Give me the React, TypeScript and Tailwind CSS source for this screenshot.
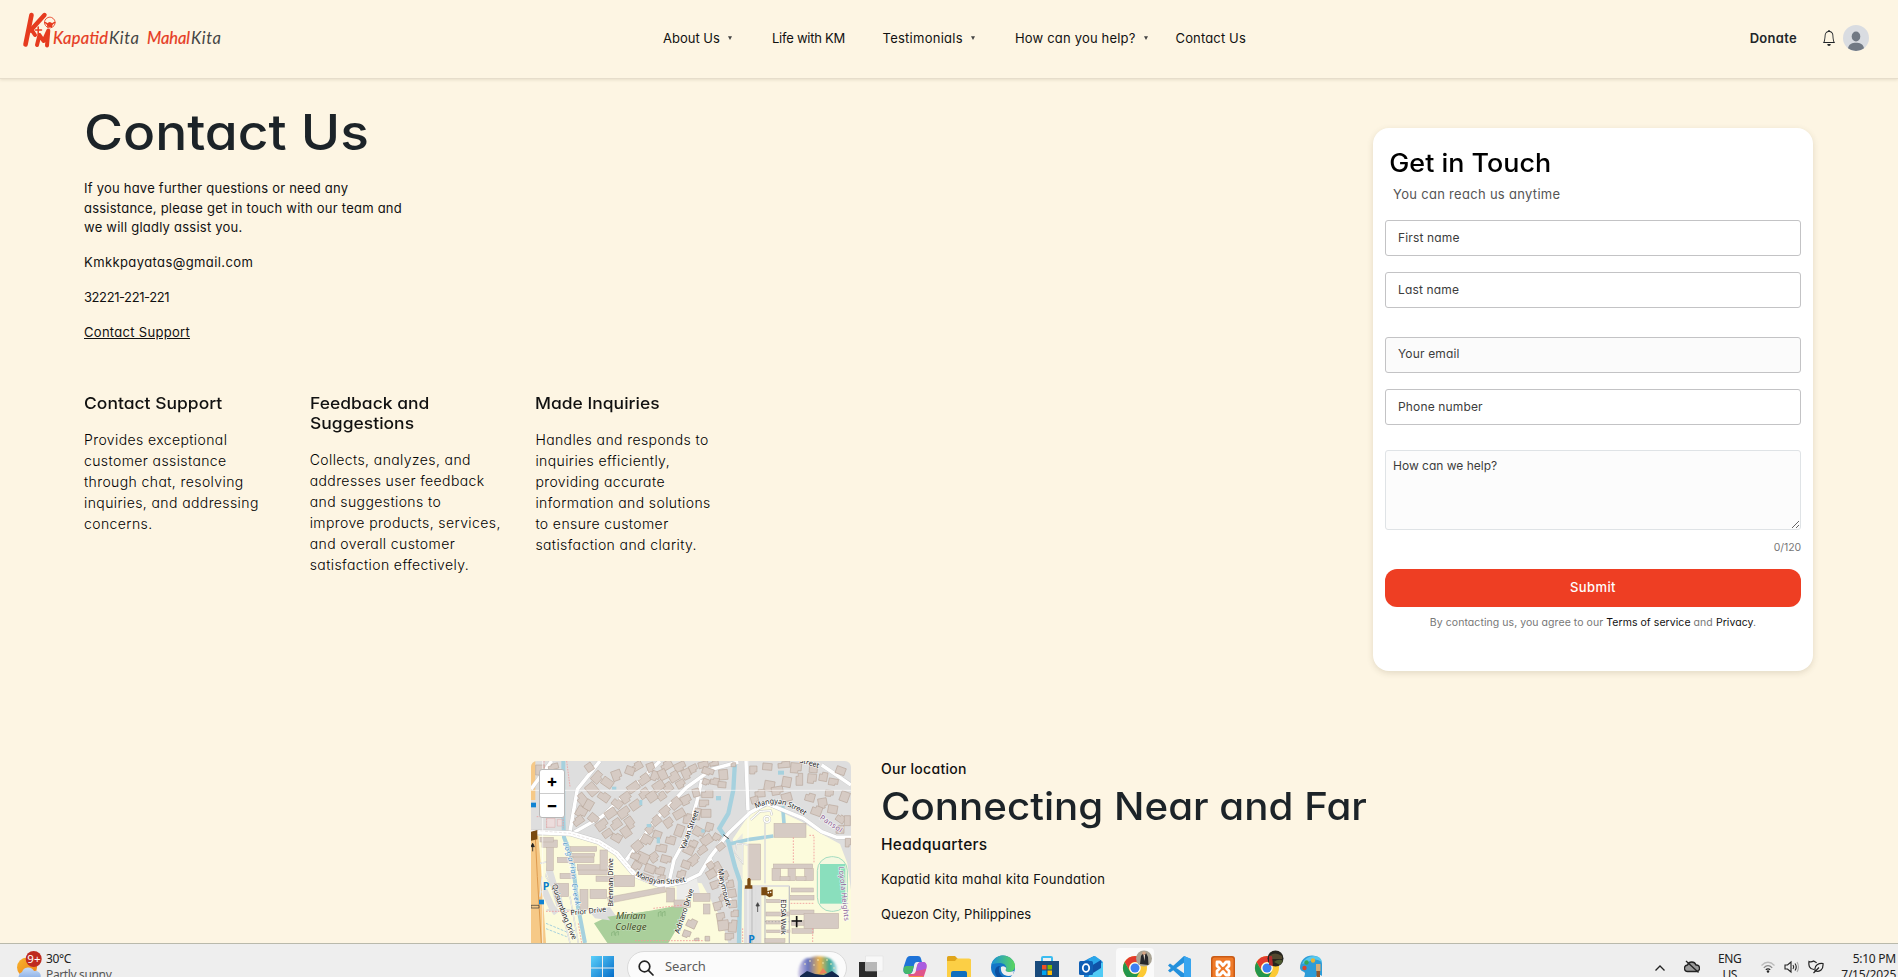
import type { ReactNode } from "react";

/* [centre x, centre y, width, height, rotation] */
const HOUSES: number[][] = [
  [232,82,34,26,-48],[262,98,34,24,35],[252,140,34,24,35],[290,76,28,30,-20],[216,118,30,36,-40],[188,150,26,40,-40],[184,186,30,30,30],[206,165,24,30,30],[175,212,32,22,-35],[220,205,28,24,40],[208,52,22,24,-35],
  [352,48,30,22,-30],[392,52,22,26,-20],[330,62,26,24,20],[372,88,34,26,-35],[406,78,24,28,20],[340,112,36,24,-35],[372,130,30,26,-35],[318,143,30,28,-35],[346,165,32,24,-35],[292,160,30,24,40],[312,188,36,26,-35],[272,190,34,24,-35],[288,222,32,26,-35],[246,225,36,26,-35],[262,250,28,20,-35],[290,262,30,24,30],[330,218,24,34,-35],[318,246,26,30,-35],
  [440,46,34,24,-30],[480,50,34,24,-25],[428,74,24,30,-25],[462,80,30,28,-30],[500,72,26,30,-25],[416,108,34,26,-35],[444,112,26,26,-35],[482,102,26,22,-30],[396,140,30,28,-35],[425,138,24,22,-35],[520,56,24,22,-25],[550,44,30,18,-15],[582,40,26,14,-10],
  [498,150,30,26,-25],[528,128,20,24,-15],[466,160,34,28,-40],[436,184,30,26,-40],[478,192,34,24,-30],[502,206,22,30,10],[446,218,26,26,-35],[478,242,24,34,20],[408,212,28,24,-40],[390,238,24,22,-40],[412,254,24,22,20],[452,270,28,24,15],[380,270,32,28,30],[352,288,30,26,-40],[424,294,32,22,10],[402,322,26,26,-35],[368,324,36,30,25],[346,318,26,20,25],[438,328,30,22,15],[390,356,30,24,20],[420,362,26,24,15],[350,348,26,24,30],[382,384,34,20,20],[424,386,22,22,5],
  [564,64,34,20,20],[610,74,26,30,-5],[584,94,26,20,10],[558,96,20,18,20],[606,104,24,18,5],[562,132,34,22,0],[552,160,28,20,0],[558,190,30,24,0],[506,300,30,24,25],[536,246,34,26,30],[560,270,34,26,-35],[546,300,30,20,-35],[522,330,34,24,-40],[498,344,26,22,20],[484,372,24,24,15],[590,262,22,20,30],[602,290,24,18,-40],[520,280,24,20,25],[568,232,22,26,15],[532,192,18,34,10],
  [640,44,14,12,0],[700,60,22,24,0],[742,50,28,20,5],[792,44,36,18,-5],[828,54,32,30,5],[748,108,30,30,10],[720,130,30,22,-5],[772,122,34,24,-10],[800,96,26,30,10],[838,88,20,36,0],[876,86,26,28,5],[880,58,24,20,5],[910,80,24,26,10],[940,96,28,20,10],[962,62,28,22,20],[870,142,28,24,15],[908,160,26,30,-10],[938,178,28,24,10],[890,182,30,28,20],[928,130,24,18,5],[974,140,26,30,20],[962,206,26,22,35],[704,150,22,20,-15],[800,142,30,24,-15],[960,238,24,24,0],[984,278,16,26,0],[982,212,18,30,0],
  [590,352,26,28,-30],[614,378,24,24,-25],[574,372,28,24,-30],[630,402,22,22,-10],[586,404,28,22,-20],[636,430,24,24,-10],[608,442,22,20,-20],[594,468,26,24,-15],[638,462,24,22,-5],[644,490,22,20,0],[602,500,24,22,-10],[610,526,32,30,-8],[638,528,24,36,5],[628,560,26,20,0],[572,346,20,20,-35],
  [515,520,28,26,25],[500,552,22,20,20],[562,566,14,14,0],[530,568,14,8,0],[60,60,26,30,0],[70,90,18,18,0],[100,50,30,16,-15],
];

/* axis-aligned campus buildings: [x, y, width, height] */
const HALLS: number[][] = [
  [762,220,96,42],[684,282,38,108],[814,414,66,12],[812,436,70,14],[812,480,70,14],[738,486,70,12],[738,512,54,10],[740,540,70,8],[814,512,40,14],
  [852,490,104,46],[740,448,60,10],[735,566,60,12],[816,536,64,14],[760,342,118,14],[756,356,26,36],[804,356,22,36],[854,356,26,36],[780,380,30,12],[828,380,30,12],
  [66,270,46,22],[80,292,20,70],[60,262,40,14],[150,290,80,14],[112,322,110,16],[172,344,86,18],[176,360,90,14],[240,300,22,60],[104,400,42,40],[180,418,24,60],[210,418,50,28],[284,376,60,34],[150,310,74,10],[228,378,54,16],[120,370,40,16],[440,414,24,42],[462,450,50,22],[520,430,50,24],[550,462,20,30],
];

function MapView() {
  const casing = "M95 33L33 118M240 33L172 118 150 245M420 33L340 112 245 200 160 248M655 36L575 58 500 112 410 205 315 335M545 90L532 150 500 260 462 330 448 392M678 33L684 180M500 392L540 372 570 322 625 250 690 188 740 160M567 320L640 470M905 45L945 72 993 105M740 160L850 205 905 245 950 262 993 262";
  return (
    <svg viewBox="33 33 960 546" className="block h-[182px] w-[320px]" fontFamily="'Noto Sans', sans-serif">
      <rect x="33" y="33" width="960" height="546" fill="#dedede" />
      <path d="M33 258L160 252 235 275 290 310 345 375 425 412 500 395 545 400 600 500 625 579H33z" fill="#fcfbdc" />
      <path d="M638 268L690 190 745 168 845 215 905 252 960 282 982 340 993 420V579H664V370z" fill="#fcfbdc" />
      <path d="M640 280L668 250V390L640 330z" fill="#e9e9e0" />
      <path d="M222 520L262 500 350 490 495 463 480 520 445 579H262z" fill="#aacf9b" />
      <path d="M262 500L350 490 330 560 262 500zM205 480L270 472 300 515 225 505z" fill="#dcdcdc" />
      <path d="M262 500L384 484 384 579H322z" fill="#aacf9b" />
      <path d="M672 408H724V579H672z" fill="#dfdfdf" />
      <path d="M470 400L530 385 540 430 470 455z" fill="#ececea" />
      <path d="M33 250L55 258 62 340 78 579H33z" fill="#f6c987" />
      <path d="M46 262L52 380 64 579" fill="none" stroke="#dd9a4e" strokeWidth="3" />
      <path d="M33 33H46V150H33z" fill="#f6c987" />
      <path d="M645 33L640 120 625 190 598 235 625 275 645 350 660 395 657 579" fill="none" stroke="#a6d1de" strokeWidth="13" />
      <path d="M628 282L690 268 760 258M788 168L792 220" fill="none" stroke="#a6d1de" strokeWidth="11" />
      <path d="M130 33V200L132 262 158 330 172 460 195 579" fill="none" stroke="#a6d1de" strokeWidth="12" />
      <path d="M78 520L145 548M78 536L140 560" fill="none" stroke="#a6d1de" strokeWidth="3" strokeDasharray="8 4" />
      <path d={casing} fill="none" stroke="#c9c9c9" strokeWidth="13" />
      <path d={casing} fill="none" stroke="#fff" strokeWidth="10.5" />
      <path d="M33 246L150 250 235 275 290 310 345 375 425 408 500 392" fill="none" stroke="#c9c9c9" strokeWidth="17" />
      <path d="M33 246L150 250 235 275 290 310 345 375 425 408 500 392" fill="none" stroke="#fff" strokeWidth="14" />
      <path d="M33 240L150 250 235 275 290 310 345 375" fill="none" stroke="#d7cfcf" strokeWidth="1.5" strokeDasharray="9 5" />
      <path d="M735 215V400M668 282V340L645 310 650 280 690 285M672 408H808M708 410V579M696 410V579M808 408V579M735 408V579M60 340L85 335 78 380 115 440 150 579M66 380L60 440M80 480L200 482M175 579L150 440" fill="none" stroke="#c4c4c4" strokeWidth="4" />
      <path d="M735 215V400M668 282V340L645 310 650 280 690 285M672 408H808M708 410V579M60 340L85 335 78 380 115 440 150 579M66 380L60 440M80 480L200 482M175 579L150 440" fill="none" stroke="#f7f7f7" strokeWidth="2.4" />
      <g fill="none" stroke="#c4c4c4" strokeWidth="7"><circle cx="741" cy="208" r="9" /><path d="M692 210L720 184 752 182 756 196" /></g>
      <g fill="none" stroke="#fff" strokeWidth="4"><circle cx="741" cy="208" r="9" /><path d="M692 210L720 184 752 182 756 196" /></g>
      <path d="M88 360L120 470 108 400M72 420L95 470 110 490" fill="none" stroke="#dedede" strokeWidth="20" />
      {HOUSES.map(([x, y, w, h, r], i) => (
        <path
          key={i}
          transform={`translate(${x} ${y}) rotate(${r})`}
          d={i % 3 === 0
            ? `M${-w / 2} ${-h / 2}H${w / 2}V${h / 4}H${w / 5}V${h / 2}H${-w / 2}z`
            : i % 3 === 1
              ? `M${-w / 2} ${-h / 2}H${w / 2}V${h / 2}H${-w / 2}z`
              : `M${-w / 2} ${-h / 4}H${-w / 6}V${-h / 2}H${w / 2}V${h / 2}H${-w / 2}z`}
          fill="#d6cbc4" stroke="#b7a598" strokeWidth="1.8"
        />
      ))}
      {HALLS.map(([x, y, w, h], i) => (
        <rect key={i} x={x} y={y} width={w} height={h} fill="#d6cbc4" stroke="#bfb0a5" strokeWidth="1.5" />
      ))}
      <path d="M262 442L434 410 438 426 266 460z" fill="#d6cbc4" stroke="#bfb0a5" strokeWidth="1.5" />
      <g fill="#a6d1de">
        <rect x="276" y="110" width="13" height="9" /><rect x="358" y="150" width="9" height="16" /><rect x="588" y="138" width="15" height="13" />
        <rect x="380" y="222" width="14" height="10" /><rect x="410" y="262" width="10" height="18" /><rect x="774" y="62" width="18" height="12" /><rect x="544" y="238" width="10" height="10" />
      </g>
      <rect x="892" y="320" width="90" height="164" rx="42" fill="#f4f8e0" stroke="#a4dcc0" strokeWidth="3" />
      <rect x="900" y="342" width="76" height="119" fill="#8adfbd" />
      <path d="M820 262V340M868 256H882V340M812 460H884M878 535V579M400 475L490 465M345 572H550M78 484H150M175 520L185 579M668 535V579" fill="none" stroke="#f29a9a" strokeWidth="2.6" strokeDasharray="5 4" />
      <path d="M735 515H808" fill="none" stroke="#999" strokeWidth="2" strokeDasharray="4 6" />
      <path d="M72 33V90H130M140 33L150 110M50 200H130V235M80 205V235" fill="none" stroke="#ee9292" strokeWidth="2" strokeDasharray="5 3" />
      <path d="M80 205H105V232H80zM112 208H126V228H112z" fill="#ecdcdc" stroke="#d8a8a8" strokeWidth="1.5" />
      <g fill="none" stroke="#7fae74" strokeWidth="2"><path d="M415 500v-12l8-4v14M427 500v-12l8-4v14M275 558v-10l8-4v12M287 558v-10l8-4v12" /></g>
      <path d="M33 121H993M68 33V579M684 33V579" stroke="#fff" strokeOpacity=".8" strokeWidth="2.4" />
      <path d="M676 406H697V416H674zM682 388L685 384H689L692 388V406H682z" fill="#7a4a10" />
      <path d="M724 412H742V424L758 418V438L748 442 738 436H724zM33 245L52 240V268L33 272z" fill="#7a4a10" />
      <circle cx="745" cy="428" r="2.5" fill="#fff" /><circle cx="752" cy="427" r="2.5" fill="#fff" />
      <path d="M830 498V532M815 513H846" stroke="#111" strokeWidth="5" />
      <path d="M713 462V486M713 458L708 468H718z" stroke="#444" strokeWidth="2.5" fill="#444" />
      <path d="M38 282V304M38 280L33 290H43zM610 254L626 266" stroke="#222" strokeWidth="2.5" fill="#222" />
      <rect x="33" y="158" width="15" height="14" fill="#0f83d3" /><rect x="57" y="449" width="15" height="14" fill="#0f83d3" />
      <path d="M33 474V466H57V474z" fill="none" stroke="#333" strokeWidth="2" />
      <g fill="#0c7cc9" fontSize="32" fontWeight="700"><text x="68" y="421">P</text><text x="685" y="580">P</text></g>
      <g fontSize="22" fill="#222" stroke="#fff" strokeOpacity=".75" strokeWidth="4" paintOrder="stroke">
        <defs>
          <path id="mangyanSouth" d="M345 376Q415 418 506 392" /><path id="mangyanEast" d="M708 176Q755 150 800 168T856 200" />
          <path id="creek" d="M128 280Q150 330 155 390T170 480" /><path id="quisumbing" d="M96 405Q113 465 130 505T162 580" />
          <path id="marymount" d="M594 358Q602 410 622 480" /><path id="topStreet" d="M838 37Q870 46 906 58" />
        </defs>
        <text textLength="158"><textPath href="#mangyanSouth">Mangyan Street</textPath></text>
        <text textLength="156"><textPath href="#mangyanEast">Mangyan Street</textPath></text>
        <text textLength="60"><textPath href="#topStreet">Street</textPath></text>
        <text transform="translate(494 300) rotate(-70)" textLength="124">Yakan Street</text>
        <text transform="translate(278 470) rotate(-90)" textLength="146">Brennan Drive</text>
        <text transform="translate(152 496) rotate(-6)" textLength="108">Prior Drive</text>
        <text transform="translate(478 552) rotate(-72)" textLength="140">Adriano Drive</text>
        <text textLength="176"><textPath href="#quisumbing">Quisumbing Drive</textPath></text>
        <text textLength="116"><textPath href="#marymount">Marymount</textPath></text>
        <text transform="translate(784 448) rotate(90)" textLength="106">EDSA Walk</text>
        <text fill="#4b90c4" fontStyle="italic" textLength="192"><textPath href="#creek">Logarian Creek</textPath></text>
        <text fill="#8a5d94" transform="translate(898 206) rotate(34)" textLength="76">Pansol</text>
        <text fill="#8a5d94" transform="translate(956 350) rotate(84)" textLength="164">Loyola Heights</text>
        <g fontSize="29" fontStyle="italic" fill="#3f4d22" strokeOpacity=".35" strokeWidth="3"><text x="288" y="507" textLength="90">Miriam</text><text x="286" y="541" textLength="94">College</text></g>
      </g>
    </svg>
  );
}

function Logo() {
  return (
    <svg viewBox="0 0 202 40" className="h-[40px] w-[202px]" fontFamily="Lato, sans-serif" fontStyle="italic">
      <g fill="none" stroke="#e63b1f" strokeLinecap="round" strokeLinejoin="round">
        <path d="M11.500 5L5.500 34.500" strokeWidth="4.600" /><path d="M24.500 5L10.500 20.500" strokeWidth="4.400" /><path d="M11 19L15 25" strokeWidth="4" />
        <path d="M17 35L19.500 25 23.500 31 28.300 20.500 27 35.500" strokeWidth="4" /><path d="M18.200 17V24.500M15.500 20H21.500" strokeWidth="1.500" />
        <circle cx="29.800" cy="12.500" r="5.300" strokeWidth=".9" strokeDasharray="3 .8" />
        <path d="M24.800 12.500C27 13 28 14 28 17M34.800 12.500C32.500 13 31.500 14 31.500 17" strokeWidth="1.400" />
      </g>
      <path d="M27 13.500Q29.800 10.500 32.500 13.500L31 17H28.500z" fill="#e63b1f" />
      <g fontSize="16.500"><text x="33" y="33.500" fill="#e63b1f" stroke="#e63b1f" strokeWidth=".2" textLength="55">Kapatid</text>
        <text x="89" y="33.500" fill="#444" textLength="30">Kita</text>
        <text x="127" y="33.500" fill="#e63b1f" stroke="#e63b1f" strokeWidth=".2" textLength="43">Mahal</text>
        <text x="171" y="33.500" fill="#444" textLength="30">Kita</text></g>
    </svg>
  );
}

const Caret = () => <svg viewBox="0 0 4 4" className="h-[4px] w-[4px]"><path d="M0 .2H4L2 4z" fill="#444" /></svg>;

function Header() {
  return (
    <header className="flex h-[79px] shrink-0 items-start border-b border-[#e6ddcb] text-[13px] leading-5 text-[#111] shadow-[0_1px_3px_rgba(80,60,20,0.13)]">
      <div className="w-[663px] pt-[10px] pl-[20px]"><Logo /></div>
      <nav className="flex pt-[28px] whitespace-nowrap">
        <span className="flex w-[109px] items-center gap-[8px]">About Us<Caret /></span>
        <span className="w-[110.500px] tracking-[-0.25px]">Life with KM</span>
        <span className="flex w-[132.500px] items-center gap-[8px] tracking-[0.26px]">Testimonials<Caret /></span>
        <span className="flex w-[160.500px] items-center gap-[8px] tracking-[0.18px]">How can you help?<Caret /></span>
        <span className="tracking-[0.15px]">Contact Us</span>
      </nav>
      <div className="ml-auto flex items-center pt-[25px] pr-[29px]">
        <span className="mr-[25px] font-semibold tracking-[0.3px] text-[#212529]">Donate</span>
        <svg viewBox="0 0 16 16" className="mr-[7px] h-[16px] w-[14px]" fill="#212529" preserveAspectRatio="none">
          <path d="M8 16a2 2 0 0 0 2-2H6a2 2 0 0 0 2 2M8 1.918l-.797.161A4 4 0 0 0 4 6c0 .628-.134 2.197-.459 3.742-.16.767-.376 1.566-.663 2.258h10.244c-.287-.692-.502-1.490-.663-2.258C12.134 8.197 12 6.628 12 6a4 4 0 0 0-3.203-3.920zM14.220 12c.223.447.481.801.780 1H1c.299-.199.557-.553.780-1C2.680 10.200 3 6.880 3 6c0-2.420 1.720-4.440 4.005-4.901a1 1 0 1 1 1.990 0A5 5 0 0 1 13 6c0 .880.320 4.200 1.220 6" />
        </svg>
        <svg viewBox="0 0 26 26" className="h-[26px] w-[26px]"><circle cx="13" cy="13" r="13" fill="#d9dce1" /><ellipse cx="13" cy="11.500" rx="4.300" ry="4.900" fill="#717984" /><path d="M5 23.200C6 19 9 17.800 13 17.800s7 1.200 8 5.400A13 13 0 0 1 5 23.200z" fill="#717984" /></svg>
      </div>
    </header>
  );
}

function InfoColumn({ title, children }: { title: ReactNode; children: ReactNode }) {
  return (
    <div className="w-[225.700px] whitespace-nowrap">
      <h3 className="mb-[16px] origin-left scale-x-[1.06] text-[16.500px] leading-5 font-medium">{title}</h3>
      <p className="text-[14px] leading-[21px] font-light tracking-[0.4px] text-black">{children}</p>
    </div>
  );
}

function ContactForm() {
  const field = "block h-[36px] w-full rounded-[3px] border border-[#c3c3c5] px-[12px] text-[12px] tracking-[0.15px] placeholder:text-[#3c3c3c] outline-none";
  return (
    <form className="ml-auto h-[543px] w-[440px] rounded-[16px] bg-white px-[12px] pt-[20px] shadow-[0_2px_6px_rgba(90,75,40,0.16)]">
      <h2 className="w-[300px] origin-left scale-x-[1.055] pl-[4px] text-[25.500px] leading-[30px] font-medium text-black">Get in Touch</h2>
      <p className="mt-[6px] pl-[8px] text-[13px] leading-5 tracking-[0.3px] text-[#555]">You can reach us anytime</p>
      <input placeholder="First name" className={`${field} mt-[16px] pb-[2px]`} />
      <input placeholder="Last name" className={`${field} mt-[16px] pb-[2px]`} />
      <input placeholder="Your email" className={`${field} mt-[29px] bg-[#fbfbfb] pb-[4px]`} />
      <input placeholder="Phone number" className={`${field} mt-[16px] pb-[2px]`} />
      <textarea placeholder="How can we help?" className="mt-[25px] block h-[80px] w-full rounded-[3px] border border-[#dfe3e6] bg-[#fcfcfc] px-[7px] py-[6px] text-[12px] leading-[18px] placeholder:text-[#3c3c3c]" />
      <div className="mt-[10px] text-right text-[10.500px] leading-4 tracking-[-0.1px] text-[#777]">0/120</div>
      <button type="button" className="mt-[13px] block h-[38px] w-full rounded-[12px] bg-[#ee3e23] text-[13px] font-medium tracking-[0.4px] text-white">Submit</button>
      <p className="mt-[8px] text-center text-[10.500px] leading-4 tracking-[0.06px] whitespace-nowrap text-[#777]">By contacting us, you agree to our <span className="text-[#111]">Terms of service</span> and <span className="text-[#111]">Privacy</span>.</p>
    </form>
  );
}

const Tile = ({ children }: { children: ReactNode }) => <svg viewBox="0 0 24 24" className="h-[24px] w-[24px] shrink-0 overflow-visible">{children}</svg>;

const ChromeMark = () => (
  <>
    <circle cx="12" cy="12" r="12" fill="#fcc934" /><path d="M1.600 6A12 12 0 0 1 22.400 6H12a6 6 0 0 0-5.200 9z" fill="#e23b2e" /><path d="M1.600 6A12 12 0 0 0 12 24l5.200-9A6 6 0 0 1 6.800 15z" fill="#24964c" />
    <circle cx="12" cy="12" r="5.800" fill="#fff" /><circle cx="12" cy="12" r="4.500" fill="#3d7ff0" />
  </>
);

function Taskbar() {
  return (
    <footer className="h-[34px] shrink-0 overflow-hidden border-t border-[#b9b9ab] bg-[#eeeeee] font-['Noto_Sans',sans-serif] text-[12px] text-[#222]">
      <div className="flex h-[48px] items-center">
        <div className="flex w-[591px] items-start gap-[4px] pl-[16px] leading-[16px]">
          <svg viewBox="0 0 26 34" className="h-[34px] w-[26px]">
            <defs><linearGradient id="sun" x2="1" y2="1"><stop stopColor="#f9b52c" /><stop offset="1" stopColor="#ea7b17" /></linearGradient><linearGradient id="cloud" x2="0" y2="1"><stop stopColor="#c7dcf8" /><stop offset="1" stopColor="#7fa6e2" /></linearGradient></defs>
            <circle cx="11" cy="16.500" r="10" fill="url(#sun)" /><path d="M5 30a5 5 0 0 1 1-9 6.500 6.500 0 0 1 12-1 5 5 0 0 1 3 10z" fill="url(#cloud)" />
            <circle cx="17.700" cy="8" r="8" fill="#bf2b20" /><text x="11.200" y="12.200" fontSize="11.500" fill="#fff" textLength="13.500">9+</text>
          </svg>
          <div className="tracking-[-0.36px]"><div>30°C</div><div className="text-[#555]">Partly sunny</div></div>
        </div>
        <div className="mr-[12px] flex items-center gap-[13px]">
          <svg viewBox="0 0 23 24" className="h-[24px] w-[23px]"><defs><linearGradient id="win" x2="1" y2="1"><stop stopColor="#5bd0fa" /><stop offset="1" stopColor="#0067c6" /></linearGradient></defs><path d="M0 0H11V11.500H0zM12 0H23V11.500H12zM0 12.500H11V24H0zM12 12.500H23V24H12z" fill="url(#win)" /></svg>
          <div className="flex h-[34px] w-[220px] items-center rounded-full border border-[#dadada] bg-[#fbfbfb] pl-[10px]">
            <svg viewBox="0 0 16 16" className="mr-[11px] h-[16px] w-[16px]" fill="none" stroke="#222" strokeWidth="1.700"><circle cx="6.500" cy="6.500" r="5.300" /><path d="M10.400 10.400L15 15" strokeLinecap="round" /></svg>
            <span className="-mt-[2px] text-[13px] tracking-[-0.05px] text-[#5c5c5c]">Search</span>
            <svg viewBox="0 0 44 30" className="ml-auto mr-[6px] h-[30px] w-[44px]">
              <defs><linearGradient id="glow"><stop stopColor="#7d6fc0" stopOpacity=".3" /><stop offset=".25" stopColor="#6472bd" /><stop offset=".55" stopColor="#f0b54b" /><stop offset=".8" stopColor="#35a596" /><stop offset="1" stopColor="#45b0c2" stopOpacity=".2" /></linearGradient><filter id="soft"><feGaussianBlur stdDeviation="1" /></filter></defs>
              <path d="M2 22C2 10 8 4 14 5 20 2 37 2 41 14L42 28H4z" fill="url(#glow)" filter="url(#soft)" /><path d="M4 23L11 18 19 21 28 22 36 18 43 23V30H4z" fill="#13284e" />
              <path d="M23 21L27 15 31 20z" fill="#ee805b" />
              <g fill="#fff3bd"><circle cx="9" cy="11" r=".8" /><circle cx="14" cy="8" r=".8" /><circle cx="18" cy="12" r=".7" /><circle cx="22" cy="7" r=".8" /><circle cx="27" cy="10" r=".7" /><circle cx="31" cy="7" r=".8" /><circle cx="35" cy="11" r=".8" /><circle cx="38" cy="15" r=".7" /></g>
            </svg>
          </div>
        </div>
        <div className="flex gap-[20px]">
          <Tile><path d="M0 6H18V24H0z" fill="#2c2c2c" /><path d="M6.500 0H24V15H6.500z" fill="#f8f8f8" stroke="#ddd" strokeWidth=".5" /><path d="M6.500 6H18V15H6.500z" fill="#b8b8b8" /></Tile>
          <Tile><path d="M7 0H15C18 0 18 3 19 6H14C11 6 11 10 10 14 9 18 7 18 4 18 0 18 0 14 1 10L3 4C4 1 5 0 7 0z" fill="#1e73d8" /><path d="M3 10H11L9 16C8 18 6 18 4 18 0 18 0 14 1 11z" fill="#45b86b" /><path d="M17 24H9C6 24 6 21 5 18H10C13 18 13 14 14 10 15 6 17 6 20 6 24 6 24 10 23 14L21 20C20 23 19 24 17 24z" fill="#e0558b" /><path d="M14 10C15 6 17 6 20 6 24 6 24 10 23 13L13 15z" fill="#a95ee0" /><path d="M6 20H20C19 23 19 24 17 24H9C7 24 6 22 6 20z" fill="#f7884a" /></Tile>
          <Tile><path d="M0 1.500Q0 0 1.500 0H8L11 3H22Q24 3 24 5V24H0z" fill="#e0a51b" /><path d="M0 5H8L10 2.500H22Q24 2.500 24 4.500V24H0z" fill="#fccf45" /><path d="M4 24V17Q4 15 6 15H18Q20 15 20 17V24z" fill="#0f6fbe" /></Tile>
          <Tile><defs><linearGradient id="edge"><stop stopColor="#1b93d8" /><stop offset="1" stopColor="#5bd65b" /></linearGradient></defs><circle cx="12" cy="11.500" r="12" fill="#1376c8" /><path d="M.300 9C2 2 7-.5 12-.5 19-.5 24 5 24 10c0 4-3 6-6 6-4 0-4-2-3-3 1-2-1-6-6-6S1 8 .300 9z" fill="url(#edge)" /><path d="M8 12c-1 7 5 11 11 10-6 4-14 1-15-6 0-4 2-6 5-6z" fill="#0c4f9e" /><path d="M10 11c2-2 6 0 5 2s0 3 4 3l4-1-1 4c-8 3-13-2-12-8z" fill="#eeeeee" /></Tile>
          <Tile><path d="M7 5V2Q7 1 8 1H16Q17 1 17 2V5" fill="none" stroke="#3bbcf0" strokeWidth="2" /><path d="M0 5H24V21Q24 24 21 24H3Q0 24 0 21z" fill="#194b7c" /><path d="M7 9h4.500v4.500H7z" fill="#f25022" /><path d="M12.500 9H17v4.500h-4.500z" fill="#7fba00" /><path d="M7 14.500h4.500V19H7z" fill="#00a4ef" /><path d="M12.500 14.500H17V19h-4.500z" fill="#ffb900" /></Tile>
          <Tile><path d="M5 5L15 0 24 6V24H5z" fill="#1a7fd2" /><path d="M9 3L16 0 23 5 14 12z" fill="#2aa7ea" /><path d="M13 13L24 6V24H8z" fill="#50cbf5" /><path d="M12 10L22 4V12L14 17z" fill="#0f52a8" /><rect y="5" width="14" height="14" rx="1.500" fill="#0f5fb5" /><ellipse cx="7" cy="12" rx="3.200" ry="3.800" fill="none" stroke="#fff" strokeWidth="1.800" /></Tile>
          <Tile><rect x="-7" y="-8" width="38" height="44" rx="4" fill="#fafafa" /><ChromeMark /><circle cx="21" cy="2.500" r="8" fill="#a9a394" /><path d="M17 8L18 0 20-3H23L25 1 25.500 9z" fill="#27272b" /><circle cx="21" cy="-2.800" r="1.800" fill="#d4a383" /><path d="M20.500-1H22L21.500 5z" fill="#e7ddd0" /></Tile>
          <Tile><path d="M17 0L24 3V21L17 24 1 9.500 3 7.500 18 18V6L3 16.500 1 14.500z" fill="#2390dc" /><path d="M17 0L24 3V21L17 24z" fill="#38a5ef" /></Tile>
          <Tile><rect width="24" height="25" rx="3" fill="#c95a15" /><rect x="1.500" y="1.500" width="21" height="22" rx="2" fill="#ef7a28" /><path d="M6 6h3l3 3.500L15 6h3v4l-2.500 2.500L18 15v4h-3l-3-3.500L9 19H6v-4l2.500-2.500L6 10z" fill="none" stroke="#fff" strokeWidth="2.800" strokeLinejoin="round" /></Tile>
          <Tile><ChromeMark /><circle cx="20.500" cy="2.500" r="8" fill="#26251f" /><path d="M14 0Q20-5 27 0V3H14z" fill="#52482f" /><path d="M14 0H17L18 10 14 9z" fill="#b22a2c" /><path d="M19 6Q24 2 28 5L25 9z" fill="#4d5a31" /></Tile>
          <Tile><path d="M1 12C1 4 7-.5 13-.5 19-.5 23 3 23 8V20C20 18 18 18 15 24H6C3 22 8 18 5 16 3 15 1 14 1 12z" fill="#2d9cd8" /><path d="M3 8Q7 0 15 0 22 0 23 6 16 1 9 6z" fill="#56c8ee" /><circle cx="7.500" cy="6.500" r="2.200" fill="#3aa655" /><circle cx="14" cy="4.500" r="2.200" fill="#e8b230" /><circle cx="5.500" cy="12" r="2.200" fill="#d8452e" /><path d="M17 8h4.500V15H17z" fill="#d4ac78" /><path d="M17.500 15h3.500V24h-3.500z" fill="#94572a" /></Tile>
        </div>
        <div className="ml-auto flex shrink-0 items-center pr-[2px]">
          <svg viewBox="0 0 10 6" className="mr-[19px] h-[6px] w-[10px]" fill="none" stroke="#222" strokeWidth="1.300"><path d="M.500 5.500L5 1 9.500 5.500" /></svg>
          <svg viewBox="0 0 16 14" className="mr-[18px] -mt-[2px] h-[14px] w-[16px]" fill="#999" stroke="#222" strokeWidth="1.300"><path d="M4 11.500A3.200 3.200 0 0 1 3.500 5 4.500 4.500 0 0 1 12 5a3.200 3.200 0 0 1 .500 6.500z" /><path d="M2 1L14.500 12.500" /></svg>
          <div className="mr-[20px] -mt-[2px] text-center leading-[16px] tracking-[-0.45px]"><div>ENG</div><div>US</div></div>
          <svg viewBox="0 0 14 12" className="mr-[9px] -mt-[2px] h-[12px] w-[14px]" fill="none" strokeWidth="1.200"><path d="M.500 4.500Q7-2 13.500 4.500" stroke="#bbb" /><path d="M2.800 6.800Q7 2.500 11.200 6.800" stroke="#888" /><path d="M4.800 8.800Q7 6.800 9.200 8.800" stroke="#222" /><circle cx="7" cy="10.500" r="1.200" fill="#222" /></svg>
          <svg viewBox="0 0 16 14" className="mr-[8px] -mt-[2px] h-[14px] w-[16px]" fill="none" stroke="#222" strokeWidth="1.100"><path d="M1 5H3.500L7 2V12L3.500 9H1z" /><path d="M9 5Q10.500 7 9 9M11 3.500Q13.500 7 11 10.500" /><path d="M13 2Q16 7 13 12" stroke="#aaa" /></svg>
          <svg viewBox="0 0 16 14" className="mr-[17px] -mt-[2px] h-[14px] w-[16px]" fill="none" stroke="#222" strokeWidth="1.200"><path d="M6 9.500C1 9 .500 5 1 1.500 3 2.500 4 2 5.500 1 7 2 8 2 8.500 3" /><path d="M7 10.500C6 5 11 3 15 3.500 15.500 9 12 13 7 10.500zM5.500 13L11 7.500" /></svg>
          <div className="-mt-[2px] text-right leading-[16px] tracking-[-0.25px]"><div>5:10 PM</div><div>7/15/2025</div></div>
        </div>
      </div>
    </footer>
  );
}

export default function App() {
  return (
    <div className="flex h-[977px] w-[1898px] flex-col overflow-hidden bg-[#fdf5e3] font-['Inter',sans-serif] text-[#111] [font-feature-settings:'cv11']">
      <div className="flex min-h-0 flex-1 flex-col overflow-hidden">
        <Header />
        <section className="flex h-[680px] shrink-0 items-start pr-[85px] pl-[84px]">
          <div className="pt-[23px] whitespace-nowrap">
            <h1 className="origin-left scale-x-[1.065] text-[50px] leading-[60px] font-medium text-[#1c2328]">Contact Us</h1>
            <div className="mt-[17px] flex flex-col gap-[15.500px] text-[13px] leading-[19.500px]">
              <p className="tracking-[0.23px]">If you have further questions or need any<br />assistance, please get in touch with our team and<br />we will gladly assist you.</p>
              <p className="tracking-[0.4px]">Kmkkpayatas@gmail.com</p>
              <p className="tracking-[-0.42px]">32221-221-221</p>
              <p className="tracking-[0.3px] underline">Contact Support</p>
            </div>
            <div className="mt-[50px] flex">
              <InfoColumn title="Contact Support">Provides exceptional<br />customer assistance<br />through chat, resolving<br />inquiries, and addressing<br />concerns.</InfoColumn>
              <InfoColumn title={<>Feedback and<br />Suggestions</>}>Collects, analyzes, and<br />addresses user feedback<br />and suggestions to<br />improve products, services,<br />and overall customer<br />satisfaction effectively.</InfoColumn>
              <InfoColumn title="Made Inquiries">Handles and responds to<br />inquiries efficiently,<br />providing accurate<br />information and solutions<br />to ensure customer<br />satisfaction and clarity.</InfoColumn>
            </div>
          </div>
          <div className="ml-auto pt-[49px]"><ContactForm /></div>
        </section>
        <section className="flex shrink-0 gap-[30px] pl-[531px]">
          <div className="relative mt-[2px] h-[240px] w-[320px] overflow-hidden rounded-[6px] bg-[#fcfbdc]">
            <MapView />
            <div className="absolute top-[8px] left-[8px] flex w-[26px] flex-col rounded-[3px] border border-[#b8b8b8] bg-white text-center text-[17px] leading-[23px] font-bold text-black">
              <span className="border-b border-[#ccc]">+</span><span>−</span>
            </div>
          </div>
          <div className="whitespace-nowrap">
            <p className="text-[14px] leading-5 font-medium tracking-[0.3px]">Our location</p>
            <h2 className="mt-[4px] origin-left scale-x-[1.06] text-[38px] leading-[46px] font-medium text-[#1c2328]">Connecting Near and Far</h2>
            <h3 className="mt-[6px] text-[15.500px] leading-5 font-medium tracking-[0.28px]">Headquarters</h3>
            <p className="mt-[14px] text-[13px] leading-5 tracking-[0.3px]">Kapatid kita mahal kita Foundation</p>
            <p className="mt-[15px] text-[13px] leading-5 tracking-[0.05px]">Quezon City, Philippines</p>
          </div>
        </section>
      </div>
      <Taskbar />
    </div>
  );
}
